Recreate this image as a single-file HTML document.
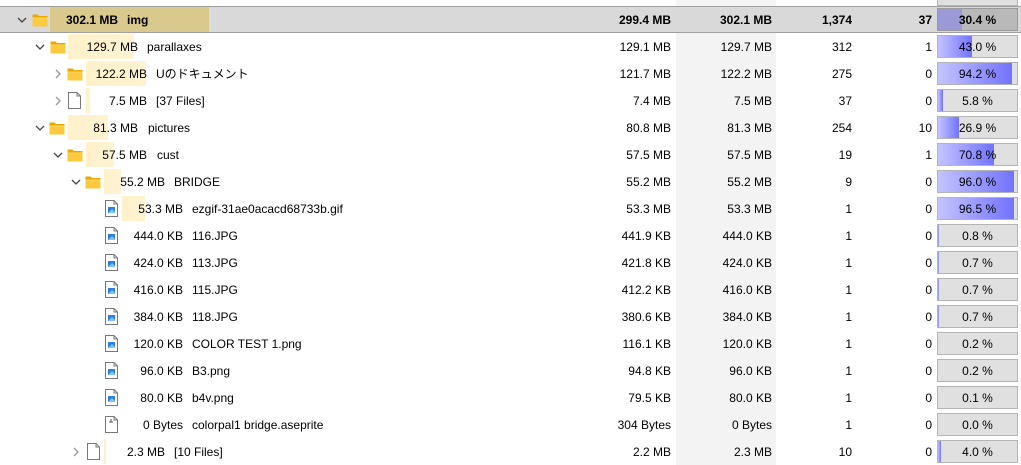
<!DOCTYPE html>
<html><head><meta charset="utf-8"><style>
body{margin:0;width:1021px;height:465px;overflow:hidden;background:#fff;font-family:"Liberation Sans","Noto Sans CJK JP",sans-serif;font-size:12px;color:#000;position:relative}
.stripe{position:absolute;left:676px;top:0;width:100px;height:465px;background:#f3f3f3}
.row{position:absolute;left:0;width:1021px;height:27px}
.sel{background:#d9d9d9;border-top:1px solid #a0a0a0;border-bottom:1px solid #a0a0a0;box-sizing:border-box}
.row>*{position:absolute}
.bar{top:1px;height:25px;background:linear-gradient(90deg,#fff1c9,#fff3d2)}
.sel .bar{top:0;height:25px;background:#d9c98c}
.t{top:7px;line-height:14px;white-space:nowrap}
.r{text-align:right}
.c1{right:350px}.c2{right:249px}.c3{right:169px}.c4{right:89px}
.pc{left:937px;top:2px;width:79px;height:21px;border:1px solid #b4b4b4;background:#e0e0e0;overflow:hidden}
.pc i{position:absolute;left:0;top:0;bottom:0;background:linear-gradient(90deg,#c4c4ff,#7272ff)}
.pc span{position:absolute;left:0;right:0;top:4px;text-align:center;line-height:14px}
.sel .pc{background:#b9b9b9;border-color:#9a9a9a}
.sel .pc i{background:#9a9ad8}
.b{font-weight:bold}
svg{position:absolute}
</style></head><body>
<div class="stripe"></div>
<div style="position:absolute;left:937px;top:-2px;width:79px;height:6px;border:1px solid #b4b4b4;background:#e0e0e0"></div>
<svg width="0" height="0" style="position:absolute">
<defs>
<symbol id="fold" viewBox="0 0 16 14"><path d="M0.5 1.5h5l1.5 1.5h8.5v10h-15z" fill="#e8a800"/><path d="M0.5 4.5h15v9h-15z" fill="#fcc93f"/><path d="M0.5 4.5h15v1h-15z" fill="#ffd966"/></symbol>
<symbol id="file" viewBox="0 0 13 17"><path d="M0.5 0.5h8.5l3.5 3.5v12.5h-12z" fill="#fff" stroke="#777"/><path d="M9 0.5v3.5h3.5" fill="none" stroke="#777"/></symbol>
<symbol id="img" viewBox="0 0 13 17"><path d="M0.5 0.5h8.5l3.5 3.5v12.5h-12z" fill="#fff" stroke="#777"/><path d="M9 0.5v3.5h3.5" fill="none" stroke="#777"/><rect x="3" y="7" width="7" height="6" fill="#2f7fe0"/><path d="M3 13l4-4 3 3v1z" fill="#7ec3ff"/></symbol>
<symbol id="ase" viewBox="0 0 13 17"><path d="M0.5 0.5h8.5l3.5 3.5v12.5h-12z" fill="#fff" stroke="#777"/><path d="M9 0.5v3.5h3.5" fill="none" stroke="#777"/><path d="M6 3v3M4 6h4" stroke="#555"/></symbol>
<symbol id="dn" viewBox="0 0 10 10"><path d="M1 3l4 4 4-4" fill="none" stroke="#444" stroke-width="1.3"/></symbol>
<symbol id="rt" viewBox="0 0 10 10"><path d="M3 1l4 4-4 4" fill="none" stroke="#999" stroke-width="1.3"/></symbol>
</defs></svg>

<div class="row sel" style="top:6px">
<div class="bar" style="left:50px;width:159px"></div>
<svg style="left:17px;top:8px" width="10" height="10"><use href="#dn"/></svg>
<svg style="left:32px;top:6px" width="16" height="14"><use href="#fold"/></svg>
<div class="t r b" style="right:903px;top:6px">302.1 MB</div><div class="t b" style="left:127px;top:6px">img</div>
<div class="t r b c1" style="top:6px">299.4 MB</div><div class="t r b c2" style="top:6px">302.1 MB</div><div class="t r b c3" style="top:6px">1,374</div><div class="t r b c4" style="top:6px">37</div>
<div class="pc" style="top:1px"><i style="width:30.4%"></i><span class="b">30.4 %</span></div>
</div>

<div class="row" style="top:33px">
<div class="bar" style="left:68px;width:66px"></div>
<svg style="left:35px;top:9px" width="10" height="10"><use href="#dn"/></svg>
<svg style="left:50px;top:7px" width="16" height="14"><use href="#fold"/></svg>
<div class="t r" style="right:883px">129.7 MB</div><div class="t" style="left:147px">parallaxes</div>
<div class="t r c1">129.1 MB</div><div class="t r c2">129.7 MB</div><div class="t r c3">312</div><div class="t r c4">1</div>
<div class="pc"><i style="width:43%"></i><span>43.0 %</span></div>
</div>

<div class="row" style="top:60px">
<div class="bar" style="left:86px;width:60px"></div>
<svg style="left:53px;top:9px" width="10" height="10"><use href="#rt"/></svg>
<svg style="left:67px;top:7px" width="16" height="14"><use href="#fold"/></svg>
<div class="t r" style="right:874px">122.2 MB</div><div class="t" style="left:156px">Uのドキュメント</div>
<div class="t r c1">121.7 MB</div><div class="t r c2">122.2 MB</div><div class="t r c3">275</div><div class="t r c4">0</div>
<div class="pc"><i style="width:94.2%"></i><span>94.2 %</span></div>
</div>

<div class="row" style="top:87px">
<div class="bar" style="left:86px;width:4px"></div>
<svg style="left:53px;top:9px" width="10" height="10"><use href="#rt"/></svg>
<svg style="left:68px;top:5px" width="13" height="17"><use href="#file"/></svg>
<div class="t r" style="right:874px">7.5 MB</div><div class="t" style="left:156px">[37 Files]</div>
<div class="t r c1">7.4 MB</div><div class="t r c2">7.5 MB</div><div class="t r c3">37</div><div class="t r c4">0</div>
<div class="pc"><i style="width:5.8%"></i><span>5.8 %</span></div>
</div>

<div class="row" style="top:114px">
<div class="bar" style="left:68px;width:40px"></div>
<svg style="left:35px;top:9px" width="10" height="10"><use href="#dn"/></svg>
<svg style="left:49px;top:7px" width="16" height="14"><use href="#fold"/></svg>
<div class="t r" style="right:883px">81.3 MB</div><div class="t" style="left:148px">pictures</div>
<div class="t r c1">80.8 MB</div><div class="t r c2">81.3 MB</div><div class="t r c3">254</div><div class="t r c4">10</div>
<div class="pc"><i style="width:26.9%"></i><span>26.9 %</span></div>
</div>

<div class="row" style="top:141px">
<div class="bar" style="left:86px;width:28px"></div>
<svg style="left:53px;top:9px" width="10" height="10"><use href="#dn"/></svg>
<svg style="left:67px;top:7px" width="16" height="14"><use href="#fold"/></svg>
<div class="t r" style="right:874px">57.5 MB</div><div class="t" style="left:157px">cust</div>
<div class="t r c1">57.5 MB</div><div class="t r c2">57.5 MB</div><div class="t r c3">19</div><div class="t r c4">1</div>
<div class="pc"><i style="width:70.8%"></i><span>70.8 %</span></div>
</div>

<div class="row" style="top:168px">
<div class="bar" style="left:104px;width:17px"></div>
<svg style="left:71px;top:9px" width="10" height="10"><use href="#dn"/></svg>
<svg style="left:85px;top:7px" width="16" height="14"><use href="#fold"/></svg>
<div class="t r" style="right:856px">55.2 MB</div><div class="t" style="left:174px">BRIDGE</div>
<div class="t r c1">55.2 MB</div><div class="t r c2">55.2 MB</div><div class="t r c3">9</div><div class="t r c4">0</div>
<div class="pc"><i style="width:96%"></i><span>96.0 %</span></div>
</div>

<div class="row" style="top:195px">
<div class="bar" style="left:122px;width:23px"></div>
<svg style="left:105px;top:5px" width="13" height="17"><use href="#img"/></svg>
<div class="t r" style="right:838px">53.3 MB</div><div class="t" style="left:192px">ezgif-31ae0acacd68733b.gif</div>
<div class="t r c1">53.3 MB</div><div class="t r c2">53.3 MB</div><div class="t r c3">1</div><div class="t r c4">0</div>
<div class="pc"><i style="width:96.5%"></i><span>96.5 %</span></div>
</div>

<div class="row" style="top:222px">
<svg style="left:105px;top:5px" width="13" height="17"><use href="#img"/></svg>
<div class="t r" style="right:838px">444.0 KB</div><div class="t" style="left:192px">116.JPG</div>
<div class="t r c1">441.9 KB</div><div class="t r c2">444.0 KB</div><div class="t r c3">1</div><div class="t r c4">0</div>
<div class="pc"><i style="width:0.8%"></i><span>0.8 %</span></div>
</div>

<div class="row" style="top:249px">
<svg style="left:105px;top:5px" width="13" height="17"><use href="#img"/></svg>
<div class="t r" style="right:838px">424.0 KB</div><div class="t" style="left:192px">113.JPG</div>
<div class="t r c1">421.8 KB</div><div class="t r c2">424.0 KB</div><div class="t r c3">1</div><div class="t r c4">0</div>
<div class="pc"><i style="width:0.7%"></i><span>0.7 %</span></div>
</div>

<div class="row" style="top:276px">
<svg style="left:105px;top:5px" width="13" height="17"><use href="#img"/></svg>
<div class="t r" style="right:838px">416.0 KB</div><div class="t" style="left:192px">115.JPG</div>
<div class="t r c1">412.2 KB</div><div class="t r c2">416.0 KB</div><div class="t r c3">1</div><div class="t r c4">0</div>
<div class="pc"><i style="width:0.7%"></i><span>0.7 %</span></div>
</div>

<div class="row" style="top:303px">
<svg style="left:105px;top:5px" width="13" height="17"><use href="#img"/></svg>
<div class="t r" style="right:838px">384.0 KB</div><div class="t" style="left:192px">118.JPG</div>
<div class="t r c1">380.6 KB</div><div class="t r c2">384.0 KB</div><div class="t r c3">1</div><div class="t r c4">0</div>
<div class="pc"><i style="width:0.7%"></i><span>0.7 %</span></div>
</div>

<div class="row" style="top:330px">
<svg style="left:105px;top:5px" width="13" height="17"><use href="#img"/></svg>
<div class="t r" style="right:838px">120.0 KB</div><div class="t" style="left:192px">COLOR TEST 1.png</div>
<div class="t r c1">116.1 KB</div><div class="t r c2">120.0 KB</div><div class="t r c3">1</div><div class="t r c4">0</div>
<div class="pc"><i style="width:0.2%"></i><span>0.2 %</span></div>
</div>

<div class="row" style="top:357px">
<svg style="left:105px;top:5px" width="13" height="17"><use href="#img"/></svg>
<div class="t r" style="right:838px">96.0 KB</div><div class="t" style="left:192px">B3.png</div>
<div class="t r c1">94.8 KB</div><div class="t r c2">96.0 KB</div><div class="t r c3">1</div><div class="t r c4">0</div>
<div class="pc"><i style="width:0.2%"></i><span>0.2 %</span></div>
</div>

<div class="row" style="top:384px">
<svg style="left:105px;top:5px" width="13" height="17"><use href="#img"/></svg>
<div class="t r" style="right:838px">80.0 KB</div><div class="t" style="left:192px">b4v.png</div>
<div class="t r c1">79.5 KB</div><div class="t r c2">80.0 KB</div><div class="t r c3">1</div><div class="t r c4">0</div>
<div class="pc"><i style="width:0.1%"></i><span>0.1 %</span></div>
</div>

<div class="row" style="top:411px">
<svg style="left:105px;top:5px" width="13" height="17"><use href="#ase"/></svg>
<div class="t r" style="right:838px">0 Bytes</div><div class="t" style="left:192px">colorpal1 bridge.aseprite</div>
<div class="t r c1">304 Bytes</div><div class="t r c2">0 Bytes</div><div class="t r c3">1</div><div class="t r c4">0</div>
<div class="pc"><span>0.0 %</span></div>
</div>

<div class="row" style="top:438px">
<div class="bar" style="left:104px;width:2px"></div>
<svg style="left:71px;top:9px" width="10" height="10"><use href="#rt"/></svg>
<svg style="left:87px;top:5px" width="13" height="17"><use href="#file"/></svg>
<div class="t r" style="right:856px">2.3 MB</div><div class="t" style="left:174px">[10 Files]</div>
<div class="t r c1">2.2 MB</div><div class="t r c2">2.3 MB</div><div class="t r c3">10</div><div class="t r c4">0</div>
<div class="pc"><i style="width:4%"></i><span>4.0 %</span></div>
</div>
</body></html>
